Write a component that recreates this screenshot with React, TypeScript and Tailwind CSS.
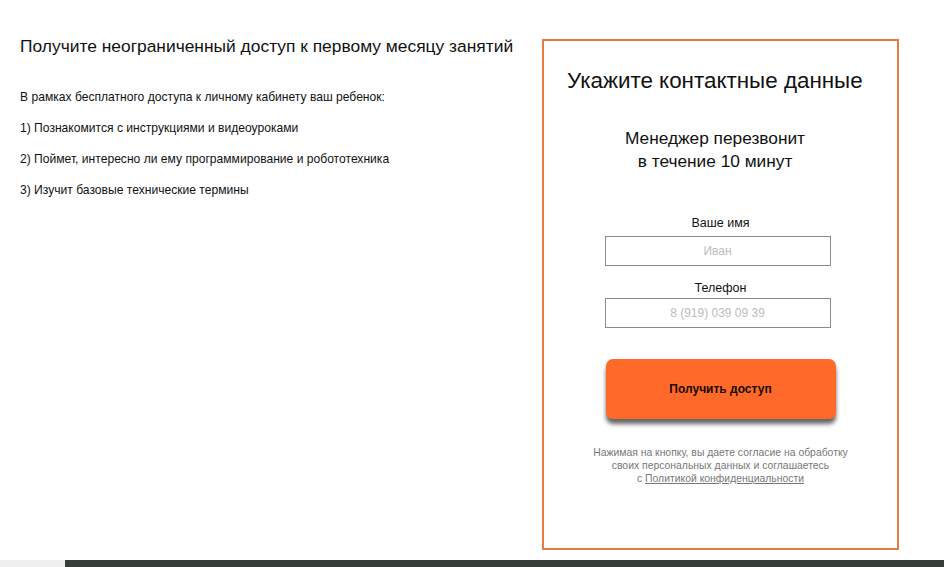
export default function App() {
  const points = [
    "В рамках бесплатного доступа к личному кабинету ваш ребенок:",
    "1) Познакомится с инструкциями и видеоуроками",
    "2) Поймет, интересно ли ему программирование и робототехника",
    "3) Изучит базовые технические термины",
  ];

  return (
    <div className="flex h-[567px] w-[944px] flex-col overflow-hidden bg-white font-['Liberation_Sans',Arial,sans-serif] text-[#111]">
      <div className="flex h-[560px]">
        <div className="w-[542px] pl-[20px] pt-[36px]">
          <h1 className="text-[17.4px] leading-[21px]">Получите неограниченный доступ к первому месяцу занятий</h1>
          <div className="mt-[33px] flex flex-col gap-[16px]">
            {points.map((p) => (
              <p key={p} className="text-[12.1px] leading-[15px]">
                {p}
              </p>
            ))}
          </div>
        </div>

        <div className="mt-[39px] flex h-[511px] w-[357px] flex-col items-center border-[2.5px] border-[#e47a45]">
          <h2 className="mt-[27px] self-start pl-[23px] text-[22.4px] leading-[26px]">Укажите контактные данные</h2>
          <p className="mr-[11px] mt-[33px] text-center text-[17.3px] leading-[23px]">
            Менеджер перезвонит
            <br />
            в течение 10 минут
          </p>

          <label className="mt-[43px] text-[12.5px] leading-[15px]">Ваше имя</label>
          <input
            placeholder="Иван"
            className="mr-[6px] mt-[5px] h-[30px] w-[226px] border border-[#8a8a8a] text-center text-[12px] outline-none placeholder:text-[#bdbdbd]"
          />

          <label className="mt-[15px] text-[12.5px] leading-[15px]">Телефон</label>
          <input
            placeholder="8 (919) 039 09 39"
            className="mr-[6px] mt-[2px] h-[30px] w-[226px] border border-[#8a8a8a] text-center text-[12px] outline-none placeholder:text-[#bdbdbd]"
          />

          <button
            type="button"
            className="mt-[31px] h-[60px] w-[230px] rounded-[7px] bg-[#ff6a2a] text-[12px] font-bold text-[#1a0a00] shadow-[0_5px_4px_rgba(0,0,0,0.6)]"
          >
            Получить доступ
          </button>

          <p className="mt-[27px] text-center text-[10.4px] leading-[13px] text-[#777]">
            Нажимая на кнопку, вы даете согласие на обработку
            <br />
            своих персональных данных и соглашаетесь
            <br />с <span className="underline">Политикой конфиденциальности</span>
          </p>
        </div>
      </div>

      <div className="flex h-[7px]">
        <div className="w-[65px] bg-[#f0f0f0]" />
        <div className="flex-1 bg-[#373d37]" />
      </div>
    </div>
  );
}
